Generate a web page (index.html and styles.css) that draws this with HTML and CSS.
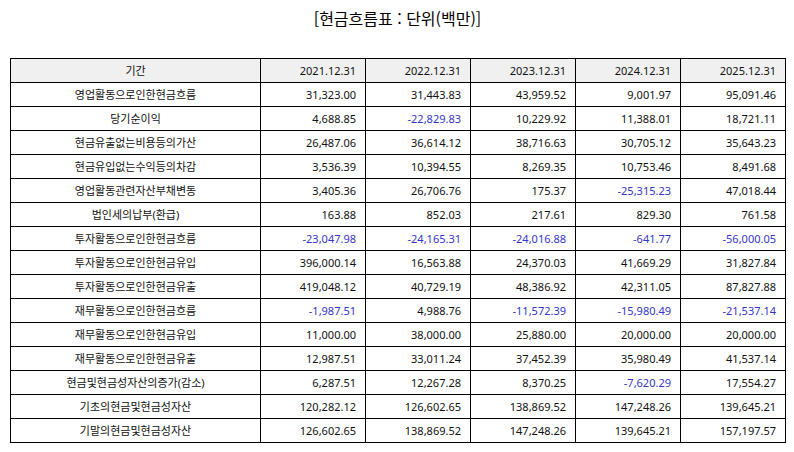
FILE: index.html
```html
<!DOCTYPE html>
<html lang="ko">
<head>
<meta charset="utf-8">
<link rel="stylesheet" href="styles.css">
</head>
<body>
<div class="page">
  <h1 class="title">[현금흐름표 : 단위(백만)]</h1>
  <table class="cf">
    <colgroup>
      <col class="c-label"><col class="c-num"><col class="c-num"><col class="c-num"><col class="c-num"><col class="c-num">
    </colgroup>
    <thead>
      <tr><th class="label">기간</th><th>2021.12.31</th><th>2022.12.31</th><th>2023.12.31</th><th>2024.12.31</th><th>2025.12.31</th></tr>
    </thead>
    <tbody>
      <tr><td class="label">영업활동으로인한현금흐름</td><td>31,323.00</td><td>31,443.83</td><td>43,959.52</td><td>9,001.97</td><td>95,091.46</td></tr>
      <tr><td class="label">당기순이익</td><td>4,688.85</td><td class="neg">-22,829.83</td><td>10,229.92</td><td>11,388.01</td><td>18,721.11</td></tr>
      <tr><td class="label">현금유출없는비용등의가산</td><td>26,487.06</td><td>36,614.12</td><td>38,716.63</td><td>30,705.12</td><td>35,643.23</td></tr>
      <tr><td class="label">현금유입없는수익등의차감</td><td>3,536.39</td><td>10,394.55</td><td>8,269.35</td><td>10,753.46</td><td>8,491.68</td></tr>
      <tr><td class="label">영업활동관련자산부채변동</td><td>3,405.36</td><td>26,706.76</td><td>175.37</td><td class="neg">-25,315.23</td><td>47,018.44</td></tr>
      <tr><td class="label">법인세의납부(환급)</td><td>163.88</td><td>852.03</td><td>217.61</td><td>829.30</td><td>761.58</td></tr>
      <tr><td class="label">투자활동으로인한현금흐름</td><td class="neg">-23,047.98</td><td class="neg">-24,165.31</td><td class="neg">-24,016.88</td><td class="neg">-641.77</td><td class="neg">-56,000.05</td></tr>
      <tr><td class="label">투자활동으로인한현금유입</td><td>396,000.14</td><td>16,563.88</td><td>24,370.03</td><td>41,669.29</td><td>31,827.84</td></tr>
      <tr><td class="label">투자활동으로인한현금유출</td><td>419,048.12</td><td>40,729.19</td><td>48,386.92</td><td>42,311.05</td><td>87,827.88</td></tr>
      <tr><td class="label">재무활동으로인한현금흐름</td><td class="neg">-1,987.51</td><td>4,988.76</td><td class="neg">-11,572.39</td><td class="neg">-15,980.49</td><td class="neg">-21,537.14</td></tr>
      <tr><td class="label">재무활동으로인한현금유입</td><td>11,000.00</td><td>38,000.00</td><td>25,880.00</td><td>20,000.00</td><td>20,000.00</td></tr>
      <tr><td class="label">재무활동으로인한현금유출</td><td>12,987.51</td><td>33,011.24</td><td>37,452.39</td><td>35,980.49</td><td>41,537.14</td></tr>
      <tr><td class="label">현금및현금성자산의증가(감소)</td><td>6,287.51</td><td>12,267.28</td><td>8,370.25</td><td class="neg">-7,620.29</td><td>17,554.27</td></tr>
      <tr><td class="label">기초의현금및현금성자산</td><td>120,282.12</td><td>126,602.65</td><td>138,869.52</td><td>147,248.26</td><td>139,645.21</td></tr>
      <tr><td class="label">기말의현금및현금성자산</td><td>126,602.65</td><td>138,869.52</td><td>147,248.26</td><td>139,645.21</td><td>157,197.57</td></tr>
    </tbody>
  </table>
</div>
</body>
</html>
```
FILE: styles.css
```css
html, body {
  margin: 0;
  padding: 0;
  background: #ffffff;
}
body {
  font-family: "Noto Sans CJK KR", "Noto Sans", sans-serif;
  color: #000000;
}
.page {
  padding: 6px 9px 0 10px;
}
.title {
  margin: 0;
  height: 52px;
  text-align: center;
  font-size: 16px;
  font-weight: normal;
  line-height: 24px;
}
.cf {
  border-collapse: collapse;
  width: 775px;
  table-layout: fixed;
  font-size: 11px;
  font-family: "Noto Sans", "Noto Sans CJK KR", sans-serif;
}
.c-label { width: 250px; }
.c-num { width: 105px; }
.cf th, .cf td {
  border: 1px solid #000000;
  height: 24px;
  padding: 0 9px 0 4px;
  text-align: right;
  font-weight: normal;
  line-height: 14px;
  white-space: nowrap;
  box-sizing: border-box;
  color: #111111;
}
.cf thead th {
  background: #f0f0f0;
}
.cf .label {
  text-align: center;
  padding: 0 4px;
}
.cf .neg {
  color: #3535cc;
}
```
